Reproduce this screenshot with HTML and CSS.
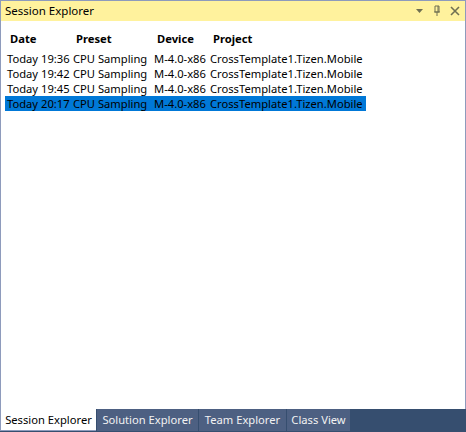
FILE: index.html
```html
<!DOCTYPE html>
<html>
<head>
<meta charset="utf-8">
<link rel="stylesheet" href="styles.css">
</head>
<body>
<div class="window">
  <div class="titlebar">
    <span class="title">Session Explorer</span>
    <div class="tools">
      <svg class="ico" width="10" height="10" viewBox="0 0 10 10"><path d="M1 3h7l-3.5 4z" fill="#707052"/></svg>
      <svg class="ico" width="10" height="12" viewBox="0 0 10 12"><path d="M3 1h4v6H3z M2 7h6 M5 7v4 M6 1v6" stroke="#707052" stroke-width="1" fill="none"/></svg>
      <svg class="ico" width="12" height="12" viewBox="0 0 12 12"><path d="M2 2l8 8M10 2l-8 8" stroke="#707052" stroke-width="1.6"/></svg>
    </div>
  </div>
  <div class="content">
    <div class="grid head">
      <div>Date</div><div>Preset</div><div>Device</div><div>Project</div>
    </div>
    <div class="grid row"><div>Today 19:36</div><div>CPU Sampling</div><div>M-4.0-x86</div><div>CrossTemplate1.Tizen.Mobile</div></div>
    <div class="grid row"><div>Today 19:42</div><div>CPU Sampling</div><div>M-4.0-x86</div><div>CrossTemplate1.Tizen.Mobile</div></div>
    <div class="grid row"><div>Today 19:45</div><div>CPU Sampling</div><div>M-4.0-x86</div><div>CrossTemplate1.Tizen.Mobile</div></div>
    <div class="grid row sel"><div>Today 20:17</div><div>CPU Sampling</div><div>M-4.0-x86</div><div>CrossTemplate1.Tizen.Mobile</div></div>
  </div>
  <div class="tabs">
    <div class="tab active">Session Explorer</div>
    <div class="tab t2">Solution Explorer</div>
    <div class="tab t3">Team Explorer</div>
    <div class="tab t4">Class View</div>
  </div>
</div>
</body>
</html>
```
FILE: styles.css
```css
html, body { margin: 0; padding: 0; }
body {
  font-family: "Noto Sans", "Open Sans", sans-serif;
  font-size: 11.2px;
  color: #000;
}
.window {
  width: 466px;
  height: 432px;
  box-sizing: border-box;
  display: flex;
  flex-direction: column;
  background: #fff;
  border-top: 1px solid #8e9bbc;
  border-left: 1px solid #8e9bbc;
  border-right: 1px solid #8e9bbc;
}
.titlebar {
  height: 20px;
  background: #fff29d;
  display: flex;
  align-items: center;
  padding-left: 4px;
  padding-right: 4px;
  flex: none;
  font-size: 11.5px;
}
.title { flex: 1; color: #000; line-height: 20px; }
.tools { display: flex; align-items: center; gap: 7px; }
.ico { display: block; }
.content {
  flex: 1;
  padding: 10px 0 0 4px;
  background: #fff;
}
.grid {
  display: grid;
  grid-template-columns: 66px 81px 56px 158px;
  width: max-content;
  height: 15px;
  line-height: 15px;
  white-space: nowrap;
}
.grid div { overflow: hidden; }
.row div { padding-left: 2px; }
.head { font-weight: bold; margin-bottom: 5px; }
.head div { padding-left: 5px; }
.sel { background: #0078d7; color: #000; }
.tabs {
  height: 22px;
  flex: none;
  background: #364e6f;
  display: flex;
  gap: 1px;
  margin: 0 -1px;
  padding-bottom: 1px;
}
.tab {
  background: #4d6082;
  color: #f2f2f2;
  line-height: 22px;
  height: 22px;
  text-align: center;
  white-space: nowrap;
  overflow: hidden;
  box-sizing: border-box;
}
.tab.active {
  width: 96px;
  background: #fff;
  color: #000;
  border-left: 1px solid #8e9bbc;
  border-bottom: 1px solid #8e9bbc;
  line-height: 21px;
}
.t2 { width: 101px; }
.t3 { width: 87px; }
.t4 { width: 63px; }
```
